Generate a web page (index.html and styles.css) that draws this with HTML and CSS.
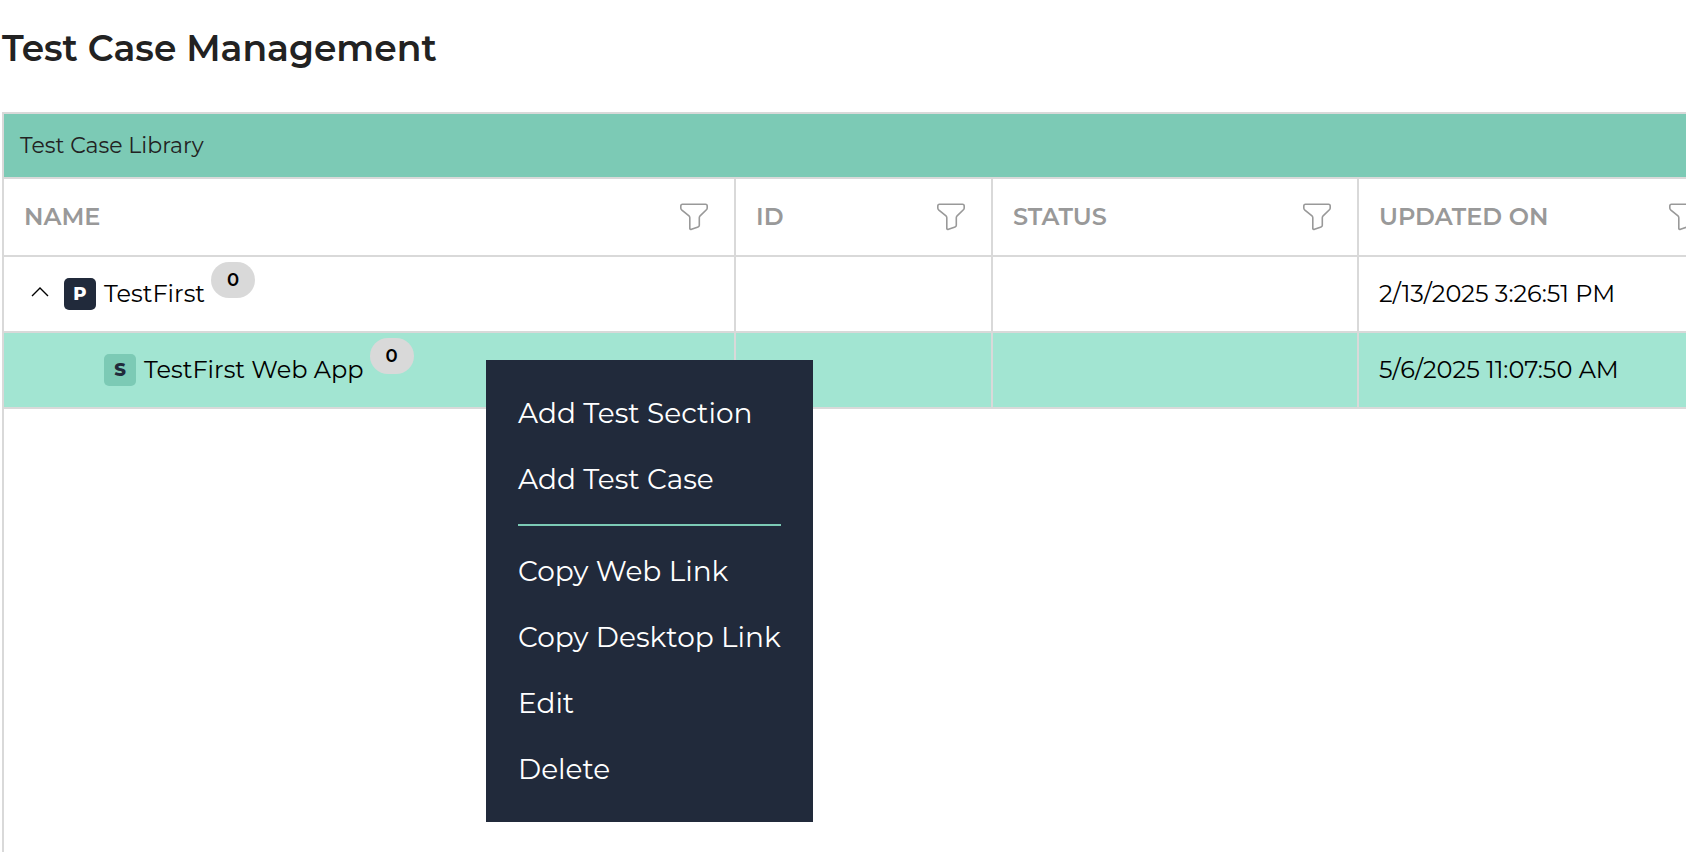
FILE: index.html
```
<!DOCTYPE html>
<html lang="en">
    <head>
        <meta charset="UTF-8">
        <meta name="viewport" content="width=device-width, initial-scale=1.0">
        <title>Test Case Management</title>
        <link rel="stylesheet" href="styles.css">
    </head>
    <body>
        <svg class="icon-defs" aria-hidden="true">
            <symbol id="icon-filter" viewBox="0 0 28 28">
                <path d="M2.500 1.200h23c1 0 1.700.7 1.700 1.700v2c0 .8-.3 1.400-.8 1.900l-6.300 6.100c-.5.5-.8 1.200-.8 1.900v7.400c0 .8-.5 1.500-1.200 1.700l-6.600 2.400c-.8.3-1.700 0-1.700-.8V14.800c0-.7-.3-1.400-.8-1.900L1.600 6.800C1.100 6.300.8 5.700.8 4.900v-2c0-1 .7-1.700 1.700-1.700z"/>
            </symbol>
        </svg>

        <h1>Test Case Management</h1>

        <section class="library">
            <h2 class="library-title">Test Case Library</h2>

            <table class="grid">
                <colgroup>
                    <col class="col-name">
                    <col class="col-id">
                    <col class="col-status">
                    <col class="col-updated">
                </colgroup>
                <thead>
                    <tr>
                        <th><div class="head">NAME <button class="filter" aria-label="Filter name"><svg><use href="#icon-filter"/></svg></button></div></th>
                        <th><div class="head">ID <button class="filter" aria-label="Filter ID"><svg><use href="#icon-filter"/></svg></button></div></th>
                        <th><div class="head">STATUS <button class="filter" aria-label="Filter status"><svg><use href="#icon-filter"/></svg></button></div></th>
                        <th><div class="head">UPDATED ON <button class="filter" aria-label="Filter updated on"><svg><use href="#icon-filter"/></svg></button></div></th>
                    </tr>
                </thead>
                <tbody>
                    <tr>
                        <td>
                            <div class="node">
                                <button class="toggle" aria-label="Collapse">
                                    <svg viewBox="0 0 18 14"><path d="M1 9l8-8 8 8"/></svg>
                                </button>
                                <span class="tag project">P</span>
                                <span class="label">TestFirst</span>
                                <span class="count">0</span>
                            </div>
                        </td>
                        <td></td>
                        <td></td>
                        <td>2/13/2025 3:26:51 PM</td>
                    </tr>
                    <tr class="selected">
                        <td>
                            <div class="node child">
                                <span class="tag suite">S</span>
                                <span class="label">TestFirst Web App</span>
                                <span class="count">0</span>
                            </div>
                        </td>
                        <td></td>
                        <td></td>
                        <td>5/6/2025 11:07:50 AM</td>
                    </tr>
                </tbody>
            </table>
        </section>

        <div class="context-menu">
            <button>Add Test Section</button>
            <button>Add Test Case</button>
            <hr>
            <button>Copy Web Link</button>
            <button>Copy Desktop Link</button>
            <button>Edit</button>
            <button>Delete</button>
        </div>
    </body>
</html>
```

FILE: styles.css
```
* {
    box-sizing: border-box;
}

body {
    display: flex;
    flex-direction: column;
    min-height: 100vh;
    margin: 0;
    padding-left: 2px;
    background-color: white;
    color: black;
    font-family: Montserrat, Inter, sans-serif;
    overflow: hidden;
}

button {
    padding: 0;
    border: none;
    background: none;
    color: inherit;
    font: inherit;
    cursor: pointer;
}

.icon-defs {
    position: absolute;
    width: 0;
    height: 0;
}

h1 {
    margin: 0;
    padding: 24px 0 40px;
    color: #222;
    font-size: 36px;
    font-weight: 600;
    line-height: 48px;
}

.library {
    flex: 1;
    border: 2px solid #d9d9d9;
    border-width: 2px 0 0 2px;
    overflow: hidden;
}

.library-title {
    margin: 0;
    padding: 16px;
    border-bottom: 2px solid #d9d9d9;
    background-color: #7ccab5;
    color: #222;
    font-size: 22px;
    font-weight: 400;
    line-height: 31px;
}

.grid {
    width: 1721px;
    table-layout: fixed;
    border-collapse: separate;
    border-spacing: 0;
    font-size: 24px;
    line-height: 28px;
}

.col-name {
    width: 732px;
}

.col-id {
    width: 257px;
}

.col-status,
.col-updated {
    width: 366px;
}

th,
td {
    height: 76px;
    padding: 0 20px;
    border-right: 2px solid #d9d9d9;
    border-bottom: 2px solid #d9d9d9;
    text-align: left;
    white-space: nowrap;
}

th {
    height: 78px;
    color: #999;
    font-weight: 600;
}

.head {
    display: flex;
    align-items: center;
    justify-content: space-between;
}

.filter {
    height: 28px;
    margin-right: 6px;
}

.filter svg {
    display: block;
    width: 28px;
    height: 28px;
    fill: none;
    stroke: #999;
    stroke-width: 1.6;
}

.selected td {
    background-color: #a2e5d2;
}

.node {
    display: flex;
    align-items: center;
    height: 74px;
}

.child {
    padding-left: 80px;
}

.toggle {
    width: 40px;
    height: 32px;
    padding-left: 7px;
}

.toggle svg {
    display: block;
    width: 18px;
    height: 14px;
    fill: none;
    stroke: black;
    stroke-width: 1.4;
}

.tag {
    width: 32px;
    margin-right: 8px;
    border-radius: 5px;
    font-size: 18px;
    font-weight: 800;
    line-height: 32px;
    text-align: center;
}

.project {
    background-color: #212a3b;
    color: white;
}

.suite {
    background-color: #7ccab5;
    color: #212a3b;
}

.count {
    align-self: flex-start;
    width: 44px;
    margin: 5px 0 0 6px;
    border-radius: 18px;
    background-color: #d9d9d9;
    font-size: 18px;
    font-weight: 600;
    line-height: 36px;
    text-align: center;
}

.context-menu {
    position: absolute;
    top: 360px;
    left: 486px;
    min-width: 327px;
    padding: 20px 32px;
    background-color: #212a3b;
    color: white;
    font-size: 28px;
}

.context-menu button {
    display: block;
    width: 100%;
    line-height: 66px;
    text-align: left;
    white-space: nowrap;
}

.context-menu hr {
    height: 2px;
    margin: 12px 0;
    border: none;
    background-color: #7ccab5;
}
```
